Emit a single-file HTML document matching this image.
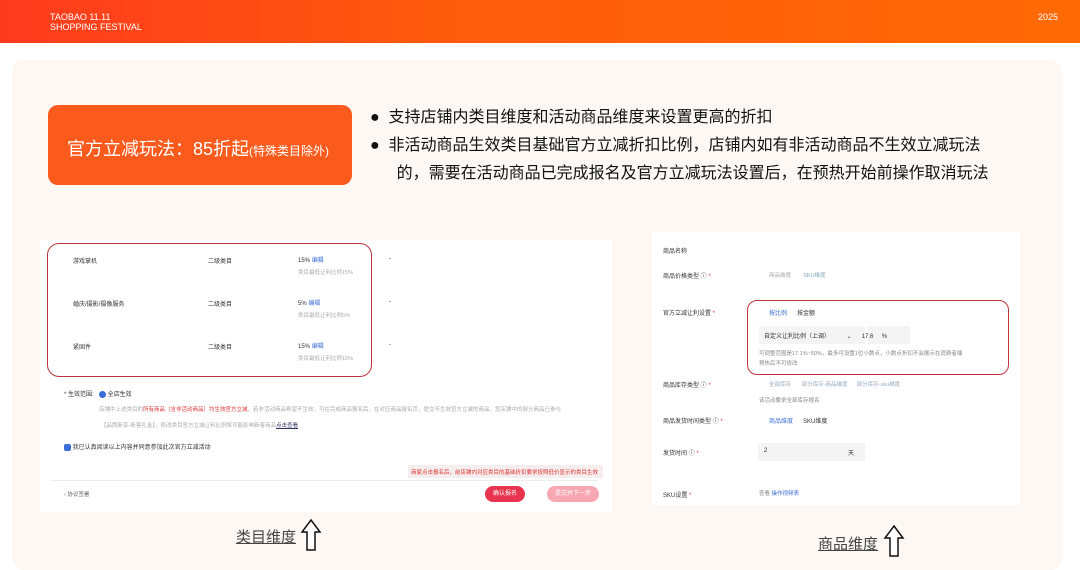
<!DOCTYPE html>
<html><head><meta charset="utf-8"><style>
*{margin:0;padding:0;box-sizing:border-box}
body{width:1080px;height:561px;overflow:hidden;background:#fff;font-family:"Liberation Sans","Noto Sans CJK SC",sans-serif;position:relative}
.a{position:absolute;white-space:nowrap}
.hdr{left:0;top:0;width:1080px;height:43px;background:linear-gradient(90deg,#fe3a1e,#fe5a0c 40%,#ff6a05);}
.card{left:12px;top:60px;width:1050px;height:510px;background:#fdf8f3;border-radius:12px}
.s{font-size:6px;color:#333}
.g{font-size:5.5px;color:#aaa}
.b{color:#3a6fd8}
</style></head><body>
<div class="a hdr"></div>
<div class="a" style="left:50px;top:12px;color:#fff;font-size:9px;line-height:10px">TAOBAO 11.11<br>SHOPPING FESTIVAL</div>
<div class="a" style="left:1038px;top:12px;color:#fff;font-size:9px">2025</div>
<div class="a card"></div>
<div class="a" style="left:48px;top:105px;width:304px;height:80px;background:#fa5a1c;border-radius:10px"></div>
<div class="a" style="left:67px;top:135px;color:#fff;font-size:18px">官方立减玩法：85折起<span style="font-size:12px">(特殊类目除外)</span></div>
<div class="a" style="left:370px;top:104px;font-size:16px;color:#111;line-height:28px">●&nbsp; 支持店铺内类目维度和活动商品维度来设置更高的折扣<br>●&nbsp; 非活动商品生效类目基础官方立减折扣比例，店铺内如有非活动商品不生效立减玩法<br>&nbsp;&nbsp;&nbsp;&nbsp;&nbsp; 的，需要在活动商品已完成报名及官方立减玩法设置后，在预热开始前操作取消玩法</div>

<div class="a" style="left:40px;top:240px;width:572px;height:272px;background:#fff"></div>
<div class="a" style="left:47px;top:243px;width:325px;height:134px;border:1.5px solid #b8343a;border-radius:12px"></div>
<div class="a s" style="left:73px;top:256px">游戏掌机</div><div class="a s" style="left:208px;top:256px">二级类目</div><div class="a s" style="left:298px;top:255px">15% <span class="b">编辑</span></div><div class="a g" style="left:298px;top:268px">类目最低让利比例15%</div><div class="a s" style="left:389px;top:256px">-</div>
<div class="a s" style="left:73px;top:299px">婚庆/摄影/摄像服务</div><div class="a s" style="left:208px;top:299px">二级类目</div><div class="a s" style="left:298px;top:298px">5% <span class="b">编辑</span></div><div class="a g" style="left:298px;top:311px">类目最低让利比例5%</div><div class="a s" style="left:389px;top:299px">-</div>
<div class="a s" style="left:73px;top:342px">紧固件</div><div class="a s" style="left:208px;top:342px">二级类目</div><div class="a s" style="left:298px;top:341px">15% <span class="b">编辑</span></div><div class="a g" style="left:298px;top:354px">类目最低让利比例15%</div><div class="a s" style="left:389px;top:342px">-</div>
<div class="a s" style="left:64px;top:389px">* 生效范围:</div>
<div class="a s" style="left:99px;top:389px"><span style="display:inline-block;width:7px;height:7px;border-radius:50%;background:#3a6fd8;vertical-align:middle"></span> 全店生效</div>
<div class="a g" style="left:99px;top:405px">店铺中上述类目的<span style="color:#d33">所有商品（含非活动商品）均生效官方立减</span>，若非活动商品希望不生效，可在完成商品报名后，在对应商品报名页，提交不生效官方立减的商品，您店铺中的部分商品已参与</div>
<div class="a g" style="left:101px;top:421px">【品牌新享-新客礼金】，修改类目官方立减让利比例将可能影响新客商品<span style="color:#336;text-decoration:underline">点击查看</span></div>
<div class="a s" style="left:64px;top:442px"><span style="display:inline-block;width:7px;height:7px;border-radius:2px;background:#3a6fd8;vertical-align:middle"></span> 我已认真阅读以上内容并同意参加此次官方立减活动</div>
<div class="a" style="left:408px;top:465px;width:195px;height:13px;background:#f6eeee;font-size:5.5px;color:#d33;padding:3px">商家点击报名后，前店铺内对应类目的基础折扣要求按照低价显示的类目生效</div>
<div class="a" style="left:50px;top:480px;width:548px;height:1px;background:#eee"></div>
<div class="a g" style="left:64px;top:490px;color:#666">‹ 协议签署</div>
<div class="a" style="left:485px;top:486px;width:40px;height:16px;background:#e8344f;border-radius:8px;color:#fff;font-size:6px;text-align:center;line-height:16px">确认报名</div>
<div class="a" style="left:547px;top:486px;width:52px;height:16px;background:#f7a7b2;border-radius:8px;color:#fff;font-size:6px;text-align:center;line-height:16px">提交并下一步</div>

<div class="a" style="left:652px;top:232px;width:368px;height:273px;background:#fff"></div>
<div class="a s" style="left:663px;top:246px">商品名称</div>
<div class="a s" style="left:663px;top:271px">商品价格类型 ⓘ <span style="color:#d33">*</span></div><div class="a g" style="left:769px;top:271px">商品维度 &nbsp;&nbsp;&nbsp;&nbsp;&nbsp;&nbsp; <span style="color:#8ab">SKU维度</span></div>
<div class="a" style="left:747px;top:300px;width:262px;height:75px;border:1.5px solid #c0333a;border-radius:10px"></div>
<div class="a s" style="left:663px;top:308px">官方立减让利设置 <span style="color:#d33">*</span></div>
<div class="a s" style="left:769px;top:308px"><span class="b">按比例</span> &nbsp;&nbsp;&nbsp;&nbsp; 按金额</div>
<div class="a" style="left:759px;top:326px;width:106px;height:18px;background:#f4f4f4"></div><div class="a" style="left:868px;top:326px;width:42px;height:18px;background:#f4f4f4"></div>
<div class="a s" style="left:764px;top:331px">自定义让利比例（上调） &nbsp;&nbsp;&nbsp;&nbsp;&nbsp;&nbsp;&nbsp;&nbsp;&nbsp;⌄ &nbsp;&nbsp;&nbsp;&nbsp; 17.6 &nbsp;&nbsp;&nbsp; %</div>
<div class="a g" style="left:759px;top:349px;color:#888">可调整范围是17.1%~50%，最多可设置1位小数点，小数点折扣不会展示在消费者端</div>
<div class="a g" style="left:759px;top:359px;color:#888">预热后不可修改</div>
<div class="a s" style="left:663px;top:380px">商品库存类型 ⓘ <span style="color:#d33">*</span></div><div class="a g" style="left:769px;top:380px;color:#9ab">全部库存 &nbsp;&nbsp;&nbsp;&nbsp;&nbsp; 部分库存-商品维度 &nbsp;&nbsp;&nbsp;&nbsp; 部分库存-sku维度</div>
<div class="a g" style="left:759px;top:396px;color:#888">该活动要求全部库存报名</div>
<div class="a s" style="left:663px;top:416px">商品发货时间类型 ⓘ <span style="color:#d33">*</span></div><div class="a s" style="left:769px;top:416px"><span class="b">商品维度</span> &nbsp;&nbsp;&nbsp;&nbsp; SKU维度</div>
<div class="a" style="left:758px;top:443px;width:107px;height:18px;background:#f4f4f4"></div>
<div class="a s" style="left:663px;top:448px">发货时间 ⓘ <span style="color:#d33">*</span></div><div class="a s" style="left:764px;top:448px">2</div><div class="a s" style="left:848px;top:448px">天</div>
<div class="a s" style="left:663px;top:490px">SKU设置 <span style="color:#d33">*</span></div><div class="a g" style="left:759px;top:489px;color:#888">查看 <span class="b">操作视频表</span></div>

<div class="a" style="left:236px;top:526px;font-size:15px;color:#444;text-decoration:underline">类目维度</div>
<svg class="a" style="left:300px;top:518px" width="22" height="34" viewBox="0 0 22 34"><path d="M11 2 L20 14 L15 14 L15 32 L7 32 L7 14 L2 14 Z" fill="#fff" stroke="#111" stroke-width="1.5"/></svg>
<div class="a" style="left:818px;top:533px;font-size:15px;color:#444;text-decoration:underline">商品维度</div>
<svg class="a" style="left:883px;top:524px" width="22" height="34" viewBox="0 0 22 34"><path d="M11 2 L20 14 L15 14 L15 32 L7 32 L7 14 L2 14 Z" fill="#fff" stroke="#111" stroke-width="1.5"/></svg>
</body></html>
